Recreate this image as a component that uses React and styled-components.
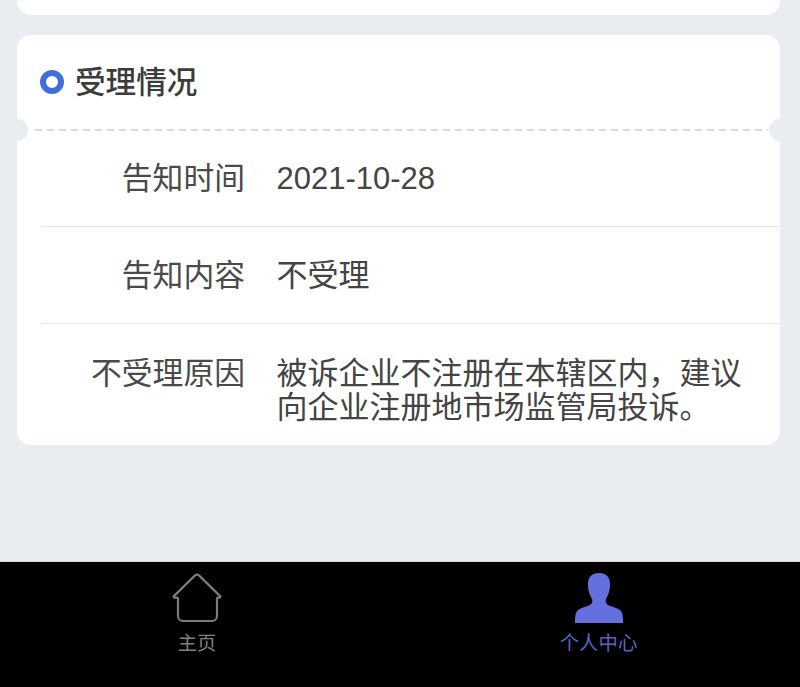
import React from "react";
import styled, { createGlobalStyle } from "styled-components";

const Global = createGlobalStyle`
  html, body { margin: 0; padding: 0; background: #e9edf2; }
  body { font-family: "Liberation Sans", "Noto Sans CJK SC", sans-serif; overflow: hidden; }
  * { box-sizing: border-box; }
`;

const Page = styled.div`
  height: 687px;
  display: flex;
  flex-direction: column;
  background: #e9edf2;
`;

const Content = styled.main`
  flex: 1;
  padding: 0 20px 0 17px;
  display: flex;
  flex-direction: column;
  gap: 20px;
`;

const CardStub = styled.div`
  height: 15px;
  background: #fff;
  border-radius: 0 0 14px 14px;
`;

const Card = styled.section`
  position: relative;
  background: #fff;
  border-radius: 14px;
`;

const CardHeader = styled.header`
  height: 94px;
  padding-left: 23px;
  display: flex;
  align-items: center;
  gap: 11px;
`;

const DashedRule = styled.div`
  height: 2px;
  margin: 0 12px 0 18px;
  background: repeating-linear-gradient(90deg, #d6d9dc 0 7px, transparent 7px 12px);
`;

const Ring = styled.span`
  width: 24px;
  height: 24px;
  border: 6px solid #3f6fd8;
  border-radius: 50%;
  flex: none;
`;

const Title = styled.h2`
  margin: 0;
  font-size: 30.6px;
  line-height: 34px;
  font-weight: 500;
  color: #3c3c3c;
`;

const Notch = styled.span`
  position: absolute;
  top: 84px;
  ${(p) => (p.$side === "left" ? "left: -11px;" : "right: -11px;")}
  width: 22px;
  height: 22px;
  border-radius: 50%;
  background: #e9edf2;
`;

const Row = styled.div`
  margin-left: 25px;
  display: grid;
  grid-template-columns: 203px 1fr;
  column-gap: 31.5px;
  padding: ${(p) => p.$pad};
  border-bottom: ${(p) => (p.$last ? "none" : "1px solid #e6e7e9")};
  font-size: 30.8px;
  line-height: 34px;
  color: #444;
`;

const Label = styled.div`
  text-align: right;
  color: #4a4a4a;
`;

const Value = styled.div`
  color: #444;
  font-size: 31px;
`;

const TabBar = styled.nav`
  height: 126px;
  flex: none;
  background: #000;
  border-top: 1px solid #d6d6d6;
  display: grid;
  grid-template-columns: 394px 406px;
`;

const Tab = styled.div`
  display: flex;
  flex-direction: column;
  align-items: center;
  padding: 11px 0 0 ${(p) => (p.$active ? "3px" : "0")};
  color: ${(p) => (p.$active ? "#5a64c4" : "#808080")};
  font-size: ${(p) => (p.$active ? "19.4px" : "19.2px")};
  line-height: 26px;
  font-family: "Noto Sans CJK SC", sans-serif;

  svg { display: block; margin-bottom: 6px; }
`;

const HomeIcon = () => (
  <svg width="50" height="50" viewBox="0 0 50 50" fill="none" stroke="#7c7c7c" strokeWidth="2.2" strokeLinejoin="round" strokeLinecap="round">
    <path d="M22.8 2.6 a3 3 0 0 1 4.4 0 L47.6 22.6 a1 1 0 0 1 -0.6 2 h-1 a1 1 0 0 0 -1 1 V43 a5 5 0 0 1 -5 5 H11 a5 5 0 0 1 -5 -5 V25.6 a1 1 0 0 0 -1 -1 H3 a1 1 0 0 1 -.6 -2 Z" />
  </svg>
);

const PersonIcon = () => (
  <svg width="50" height="50" viewBox="0 0 50 50" fill="#6570e0">
    <path d="M25 0 C33 0 36.5 5 36 13 C35.8 19 33.5 23 32 26 C31 29 32 31 35 32.5 C40 34.5 46 35 48 40 C49 43 49 46 49 50 H1 C1 46 1 43 2 40 C4 35 10 34.5 15 32.5 C18 31 19 29 18 26 C16.5 23 14.2 19 14 13 C13.5 5 17 0 25 0 Z" />
  </svg>
);

export default function App() {
  return (
    <Page>
      <Global />
      <Content>
        <CardStub />
        <Card>
          <CardHeader>
            <Ring />
            <Title>受理情况</Title>
          </CardHeader>
          <DashedRule />
          <Notch $side="left" />
          <Notch $side="right" />
          <Row $pad="31px 38px 30px 0">
            <Label>告知时间</Label>
            <Value>2021-10-28</Value>
          </Row>
          <Row $pad="32px 38px 30px 0">
            <Label>告知内容</Label>
            <Value>不受理</Value>
          </Row>
          <Row $last $pad="33px 38px 20px 0">
            <Label>不受理原因</Label>
            <Value>被诉企业不注册在本辖区内，建议向企业注册地市场监管局投诉。</Value>
          </Row>
        </Card>
      </Content>
      <TabBar>
        <Tab>
          <HomeIcon />
          主页
        </Tab>
        <Tab $active>
          <PersonIcon />
          个人中心
        </Tab>
      </TabBar>
    </Page>
  );
}
